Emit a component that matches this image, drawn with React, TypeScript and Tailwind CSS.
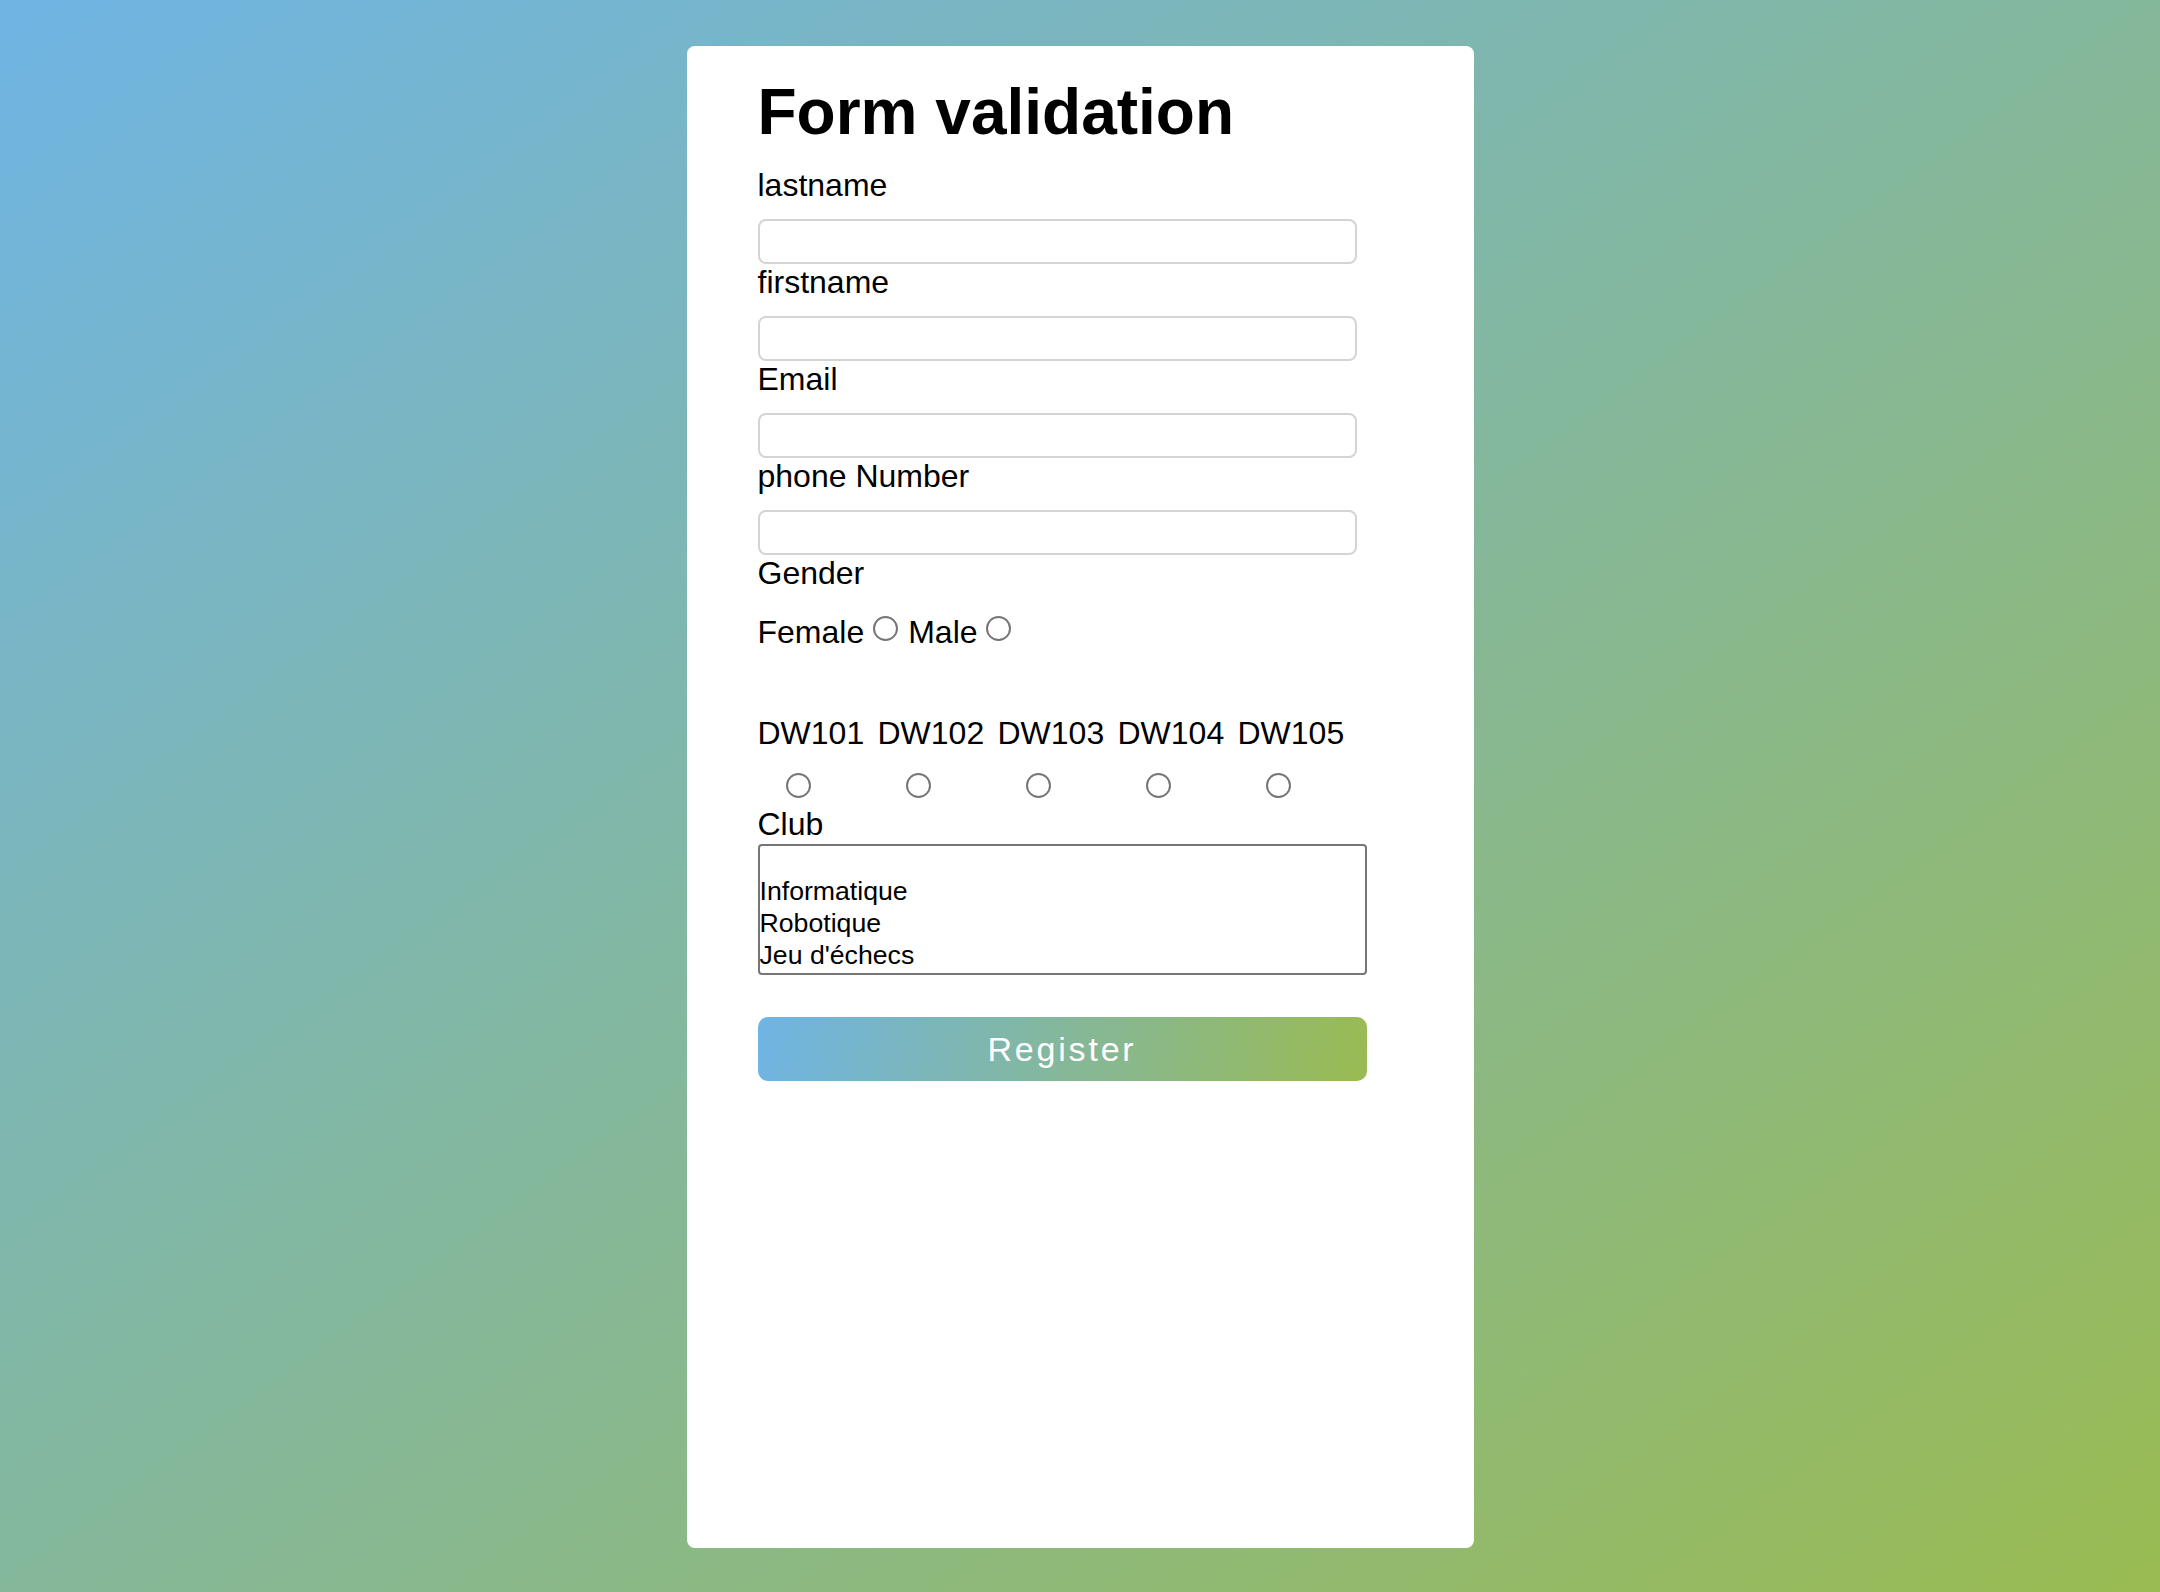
import { useState } from "react";

const fields = ["lastname", "firstname", "Email", "phone Number"];
const groups = ["DW101", "DW102", "DW103", "DW104", "DW105"];
const clubs = ["", "Informatique", "Robotique", "Jeu d'échecs"];

export default function App() {
  const [values, setValues] = useState<Record<string, string>>({});

  return (
    <div className="min-h-[1592px] w-full flex justify-center pt-[46px] pb-[44px] bg-[linear-gradient(to_bottom_right,#6fb4e4,#9abb52)] font-['Liberation_Sans',Arial,sans-serif] text-black">
      <form
        className="w-[787px] h-[1502px] bg-white rounded-[8px] pl-[71px] pt-[29px]"
        onSubmit={(e) => e.preventDefault()}
      >
        <h1 className="text-[64px] leading-[74px] font-bold">Form validation</h1>

        {/* Text inputs */}
        <div className="mt-[18px]">
          {fields.map((f) => (
            <div key={f}>
              <label className="block text-[32px] leading-[36px] mb-[16px]">{f}</label>
              <input
                type="text"
                value={values[f] ?? ""}
                onChange={(e) => setValues({ ...values, [f]: e.target.value })}
                className="block w-[599px] h-[45px] border-2 border-[#d4d4d4] rounded-[8px] bg-white px-2 text-[26px] outline-none"
              />
            </div>
          ))}
        </div>

        {/* Gender */}
        <p className="text-[32px] leading-[36px]">Gender</p>
        <div className="mt-[23px] flex items-start h-[36px] text-[32px] leading-[36px]">
          <span>Female</span>
          <input
            type="radio"
            name="gender"
            className="appearance-none w-[25px] h-[25px] rounded-full border-2 border-[#767676] mt-[2px] ml-[9px]"
          />
          <span className="ml-[10px]">Male</span>
          <input
            type="radio"
            name="gender"
            className="appearance-none w-[25px] h-[25px] rounded-full border-2 border-[#767676] mt-[2px] ml-[8px]"
          />
        </div>

        {/* Groups */}
        <div className="mt-[65px] flex">
          {groups.map((g) => (
            <div key={g} className="w-[120px] flex flex-col">
              <span className="text-[32px] leading-[36px]">{g}</span>
              <input
                type="radio"
                name="group"
                className="appearance-none w-[25px] h-[25px] rounded-full border-2 border-[#767676] mt-[22px] ml-[28px]"
              />
            </div>
          ))}
        </div>

        {/* Club */}
        <p className="mt-[8px] text-[32px] leading-[36px]">Club</p>
        <div
          role="listbox"
          className="mt-[2px] w-[609px] h-[131px] border-2 border-[#767676] rounded-[4px] overflow-hidden text-[26.67px]"
        >
          {clubs.map((c, i) => (
            <div
              key={i}
              role="option"
              className={i === 0 ? "h-[29px]" : "h-[32px] leading-[32px]"}
            >
              {c}
            </div>
          ))}
        </div>

        <button
          type="submit"
          className="mt-[42px] w-[609px] h-[64px] rounded-[10px] bg-[linear-gradient(100deg,#6fb4e4,#9abb52)] text-white text-[34px] tracking-[2.8px] flex items-center justify-center"
        >
          Register
        </button>
      </form>
    </div>
  );
}
